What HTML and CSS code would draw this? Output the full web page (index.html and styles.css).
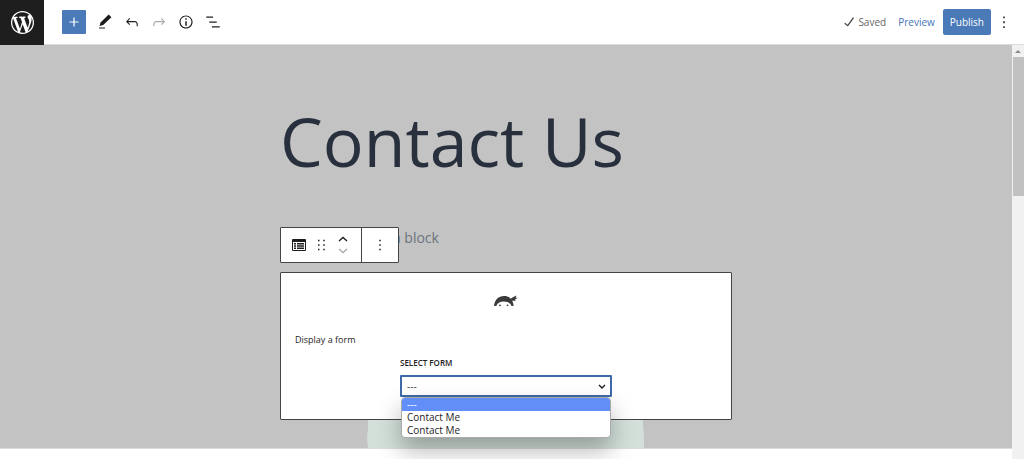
FILE: index.html
```html
<!DOCTYPE html>
<html lang="en">
<head>
    <meta charset="UTF-8">
    <meta name="viewport" content="width=device-width, initial-scale=1.0">
    <title>Edit Page</title>
    <link rel="stylesheet" href="styles.css">
</head>
<body>
    <header class="header">
        <a class="logo" href="#" aria-label="View Pages">
            <svg width="23" height="23" viewBox="0 0 20 20"><path d="M20 10c0-5.51-4.49-10-10-10C4.48 0 0 4.49 0 10c0 5.52 4.48 10 10 10 5.51 0 10-4.48 10-10zM7.78 15.37L4.37 6.22c.55-.02 1.17-.08 1.17-.08.5-.06.44-1.13-.06-1.11 0 0-1.45.11-2.37.11-.18 0-.37 0-.58-.01C4.12 2.69 6.87 1.11 10 1.11c2.33 0 4.45.87 6.05 2.34-.68-.11-1.65.39-1.65 1.58 0 .74.45 1.36.9 2.1.35.61.55 1.36.55 2.46 0 1.49-1.4 5-1.4 5l-3.03-8.37c.54-.02.82-.17.82-.17.5-.05.44-1.25-.06-1.22 0 0-1.44.12-2.38.12-.87 0-2.33-.12-2.33-.12-.5-.03-.56 1.2-.06 1.22l.92.08 1.26 3.41zM17.41 10c.24-.64.74-1.87.43-4.25.7 1.29 1.05 2.71 1.05 4.25 0 3.29-1.73 6.24-4.4 7.78.97-2.59 1.94-5.2 2.92-7.78zM6.1 18.09C3.12 16.65 1.11 13.53 1.11 10c0-1.3.23-2.48.72-3.59C3.25 10.3 4.67 14.2 6.1 18.09zm4.03-6.63l2.58 6.98c-.86.29-1.76.45-2.71.45-.79 0-1.57-.11-2.29-.33.81-2.38 1.62-4.74 2.42-7.1z"/></svg>
        </a>
        <div class="tools">
            <button class="tool add" aria-label="Add block">
                <svg width="18" height="18" viewBox="0 0 24 24"><path d="M18 11.2h-5.2V6h-1.6v5.2H6v1.6h5.2V18h1.6v-5.2H18z"/></svg>
            </button>
            <button class="tool" aria-label="Tools">
                <svg width="18" height="18" viewBox="0 0 24 24"><path d="M20.600 5.600L16.900 2 6 12.500l-1.300 4.900 4.900-1.300L20.600 5.600zM4 20.800h8v-1.500H4v1.500z"/></svg>
            </button>
            <button class="tool" aria-label="Undo">
                <svg width="18" height="18" viewBox="0 0 24 24"><path d="M18.3 11.7c-.6-.6-1.4-.9-2.3-.9H6.7l2.9-3.3-1.1-1-4.5 5L8.5 16l1-1-2.7-2.7H16c.5 0 .9.2 1.3.5 1 1 1 3.4 1 4.5v.3h1.5v-.2c0-1.5 0-4.3-1.5-5.7z"/></svg>
            </button>
            <button class="tool" aria-label="Redo" disabled>
                <svg width="18" height="18" viewBox="0 0 24 24"><path d="M15.6 6.5l-1.1 1 2.9 3.3H8c-.9 0-1.7.3-2.3.9-1.4 1.5-1.4 4.2-1.4 5.6v.2h1.5v-.3c0-1.1 0-3.5 1-4.5.3-.3.7-.5 1.3-.5h9.2L14.5 15l1.1 1.1 4.6-4.6-4.6-5z"/></svg>
            </button>
            <button class="tool" aria-label="Details">
                <svg width="18" height="18" viewBox="0 0 24 24"><path d="M12 3.2c-4.8 0-8.8 3.9-8.8 8.8 0 4.8 3.9 8.8 8.8 8.8 4.8 0 8.8-3.9 8.8-8.8 0-4.8-4-8.8-8.8-8.8zm0 16c-4 0-7.2-3.3-7.2-7.2C4.8 8 8 4.8 12 4.8s7.2 3.3 7.2 7.2c0 4-3.2 7.2-7.2 7.2zM11 17h2v-6h-2v6zm0-8h2V7h-2v2z"/></svg>
            </button>
            <button class="tool" aria-label="List view">
                <svg width="18" height="18" viewBox="0 0 24 24"><path d="M12 4.700H3v1.700h9V4.700zm-1.500 12.800v1.700H21v-1.700H10.500zm6.500-6.300H7v1.700h10v-1.700z"/></svg>
            </button>
        </div>
        <div class="actions">
            <span class="saved">
                <svg width="18" height="18" viewBox="0 0 24 24"><path d="M17.300 5.500l-7.200 10.100-3.300-2.500-1 1.300 4.700 3.500L18.700 6.500z"/></svg>
                Saved
            </span>
            <button class="preview">Preview</button>
            <button class="publish">Publish</button>
            <button class="more" aria-label="Options">
                <svg width="18" height="18" viewBox="0 0 24 24"><path d="M11 4.500h2V7h-2zM11 11h2v2.500h-2zM11 17.500h2V20h-2z"/></svg>
            </button>
        </div>
    </header>

    <div class="editor">
        <main class="content">
            <div class="canvas">
                <div class="column">
                    <h1>Contact Us</h1>
                    <p class="prompt">Type / to choose a block</p>

                    <div class="block">
                        <div class="block-toolbar">
                            <div class="group">
                                <button aria-label="Ninja Form">
                                    <svg width="14" height="12" viewBox="0 0 14 12"><path fill-rule="evenodd" d="M1 0h12q1 0 1 1v10q0 1-1 1H1q-1 0-1-1V1q0-1 1-1zM1 3v8h12V3zM2 4h2v1.500H2zM5 4h7v1.500H5zM2 6.300h2v1.500H2zM5 6.300h7v1.500H5zM2 8.600h2V10H2zM5 8.600h7V10H5z"/></svg>
                                </button>
                                <button aria-label="Drag">
                                    <svg width="18" height="18" viewBox="0 0 24 24"><path d="M8 5h2v2H8zM15 5h2v2h-2zM8 11h2v2H8zM15 11h2v2h-2zM8 17h2v2H8zM15 17h2v2h-2z"/></svg>
                                </button>
                                <div class="movers">
                                    <button aria-label="Move up">
                                        <svg width="10" height="6" viewBox="0 0 10 6"><path class="stroke" d="M1 5l4-3.500L9 5"/></svg>
                                    </button>
                                    <button aria-label="Move down" disabled>
                                        <svg width="10" height="6" viewBox="0 0 10 6"><path class="stroke" d="M1 1l4 3.500L9 1"/></svg>
                                    </button>
                                </div>
                            </div>
                            <div class="group">
                                <button aria-label="More options">
                                    <svg width="18" height="18" viewBox="0 0 24 24"><path d="M11 5h2v2h-2zM11 11h2v2h-2zM11 17h2v2h-2z"/></svg>
                                </button>
                            </div>
                        </div>

                        <svg class="ninja" width="24" height="12" viewBox="0 0 24 12"><path d="M0 11C.8 4.500 4.500 1 10 1c2.800 0 5 .8 6.800 2.800C18.500 2.500 20 1.200 22.800.500L21.500 2.500 23.500 3 21 4.500 21.800 5.700 18.200 5.800C19 7.300 19.500 9 19.500 11H17.500C16.500 8 14 6.500 9.800 6.500 5.800 6.500 3.200 8 2.300 11z"/><circle cx="6" cy="10.300" r=".9"/><circle cx="13.500" cy="10.300" r=".9"/></svg>
                        <p class="title">Display a form</p>
                        <div class="field">
                            <label for="form-select">Select Form</label>
                            <div class="select-wrap">
                                <select id="form-select">
                                    <option>---</option>
                                    <option>Contact Me</option>
                                    <option>Contact Me</option>
                                </select>
                                <svg class="arrow" width="8" height="6" viewBox="0 0 8 6"><path class="stroke" d="M1 1l3 3 3-3"/></svg>
                                <ul class="options">
                                    <li class="selected">---</li>
                                    <li>Contact Me</li>
                                    <li>Contact Me</li>
                                </ul>
                            </div>
                        </div>
                    </div>
                    <svg class="blob" width="278" height="28" viewBox="0 0 278 28"><path d="M1 0h275v6l1 10v12H1l-1-11 1-8z"/></svg>
                </div>
            </div>
        </main>
        <div class="scrollbar">
            <svg width="12" height="12" viewBox="0 0 12 12"><path d="M3 8l3-3 3 3z"/></svg>
            <div class="thumb"></div>
        </div>
    </div>
</body>
</html>
```
FILE: styles.css
```css
* {
    box-sizing: border-box;
}

body {
    font-family: "Open Sans", "Noto Sans", sans-serif;
    font-size: 10px;
    color: #1e1e1e;
    background: #fff;
    margin: 0;
    min-height: 100vh;
    display: flex;
    flex-direction: column;
}

button {
    display: flex;
    align-items: center;
    justify-content: center;
    padding: 0;
    border: none;
    background: none;
    font: inherit;
    color: inherit;
    cursor: pointer;
}

button:disabled {
    color: #aaa;
}

svg {
    display: block;
    fill: currentColor;
}

.stroke {
    fill: none;
    stroke: currentColor;
    stroke-width: 1.4;
}

.header {
    display: flex;
    align-items: center;
    height: 45px;
    border-bottom: 1px solid #dcdcdc;
}

.logo {
    display: flex;
    align-items: center;
    justify-content: center;
    width: 44px;
    height: 45px;
    background: #1e1e1e;
    color: #fff;
}

.tools {
    display: flex;
    gap: 3px;
    margin-left: 18px;
}

.tool {
    width: 24px;
    height: 24px;
}

.add {
    background: #4a7ab8;
    color: #fff;
    border-radius: 1px;
    margin-right: 4px;
}

.actions {
    display: flex;
    align-items: center;
    margin-left: auto;
    padding-right: 11px;
}

.saved {
    display: flex;
    align-items: center;
    color: #666;
}

.saved svg {
    color: #444;
}

.preview {
    color: #3f74b8;
    margin: 0 8px 0 12px;
}

.publish {
    height: 26px;
    padding: 0 7px;
    background: #4a7ab8;
    color: #fff;
    border-radius: 2px;
}

.more {
    margin-left: 4px;
}

.editor {
    flex: 1;
    display: flex;
}

.content {
    flex: 1;
}

.canvas {
    background: #c3c3c3;
    padding: 48px 20px 28px;
    border-bottom: 1px solid #dcdcdc;
}

.column {
    position: relative;
    max-width: 452px;
    margin: 0 auto;
}

h1 {
    margin: 0;
    font-size: 68px;
    font-weight: 400;
    line-height: 95px;
    color: #28303d;
}

.prompt {
    margin: 40px 0 24px;
    padding-left: 2px;
    font-size: 14px;
    line-height: 20px;
    color: #6c757d;
}

.block {
    position: relative;
    z-index: 1;
    padding: 22px 14px;
    background: #fff;
    border: 1px solid #444;
    border-radius: 1px;
}

.block-toolbar {
    position: absolute;
    left: -1px;
    bottom: 100%;
    margin-bottom: 10px;
    display: flex;
    height: 36px;
    background: #fff;
    border: 1px solid #444;
    border-radius: 1px;
}

.group {
    display: flex;
    align-items: center;
    gap: 4px;
    padding: 0 9px;
}

.group + .group {
    border-left: 1px solid #444;
}

.group button {
    min-width: 18px;
}

.movers {
    display: grid;
    gap: 6px;
}

.ninja {
    margin: 0 auto;
    color: #3a3a3a;
}

.title {
    margin: 25px 0 9px;
    font-size: 9px;
    line-height: 16px;
}

.field {
    width: 212px;
    margin: 0 auto;
}

.field label {
    display: block;
    font-size: 8px;
    font-weight: 600;
    line-height: 12px;
    text-transform: uppercase;
    margin-bottom: 6px;
}

.select-wrap {
    position: relative;
}

select {
    display: block;
    width: 100%;
    height: 22px;
    padding: 0 5px;
    appearance: none;
    background: #fff;
    border: 2px solid #3f69a8;
    border-radius: 1px;
    outline: none;
    font: inherit;
    color: #444;
}

.arrow {
    position: absolute;
    right: 6px;
    top: 9px;
}

.options {
    position: absolute;
    top: 100%;
    left: 1px;
    right: 1px;
    margin: 0;
    padding: 0;
    list-style: none;
    background: #fff;
    border: 1px solid #aaa;
    border-radius: 4px;
    overflow: hidden;
    box-shadow: 0 12px 24px rgba(0, 0, 0, 0.3);
    line-height: 13px;
}

.options li {
    padding: 0 5px;
}

.options .selected {
    background: #628ff7;
    color: #fff;
}

.blob {
    position: absolute;
    top: 100%;
    left: 87px;
    color: #d3e0da;
}

.scrollbar {
    width: 12px;
    background: #f1f1f1;
    color: #8a8a8a;
}

.thumb {
    height: 139px;
    margin-left: 1px;
    background: #c1c1c1;
}
```
